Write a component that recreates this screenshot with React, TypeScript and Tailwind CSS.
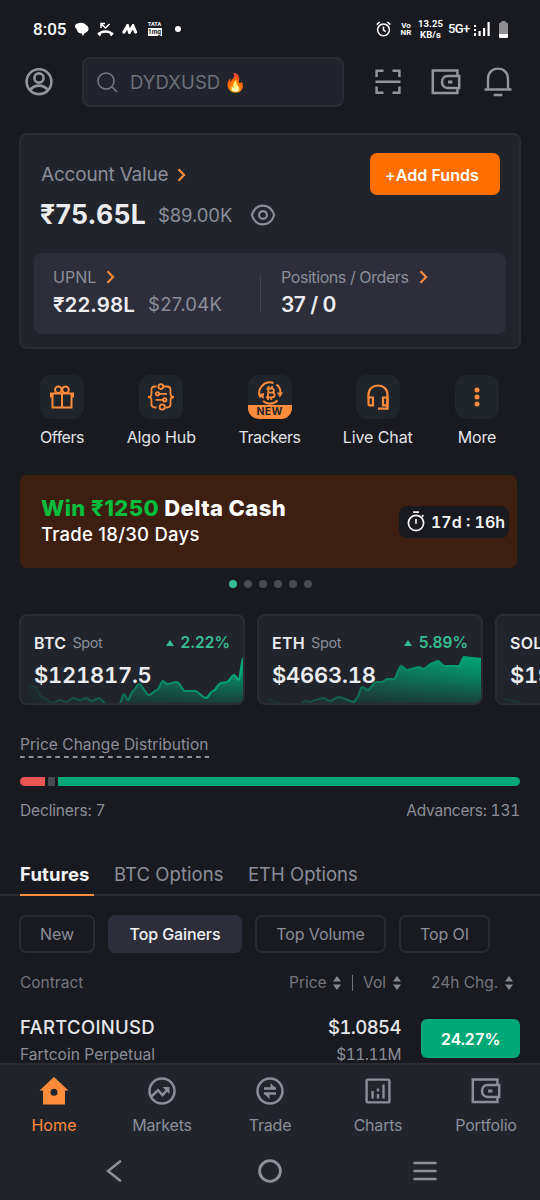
import type { ReactNode } from 'react';

const actions = [
  { label: 'Offers', icon: <GiftIcon />, width: 'w-[66px]', text: 'tracking-[-0.5px]' },
  { label: 'Algo Hub', icon: <AlgoIcon />, width: 'w-[84px]', text: 'tracking-[-0.1px]' },
  { label: 'Trackers', icon: <TrackerIcon />, width: 'w-[84px]', text: 'tracking-[-0.5px]', isNew: true },
  { label: 'Live Chat', icon: <HeadsetIcon />, width: 'w-[84px]', text: 'tracking-[-0.1px]' },
  { label: 'More', icon: <MoreIcon />, width: 'w-[66px]', text: 'tracking-[-0.2px]' },
];

const btcLine: number[][][] = [
  [[8, 70], [15, 72], [22, 82], [33, 88], [40, 85], [46, 87], [53, 83], [60, 85], [66, 83], [72, 86], [79, 83], [87, 90]],
  [[99, 90], [104, 79], [108, 85], [113, 76], [119, 69], [129, 80], [137, 75], [143, 66], [147, 69], [157, 67], [165, 76], [175, 76], [186, 83], [193, 76], [201, 68], [207, 67], [214, 60], [219, 65], [223, 43]],
];

const ethLine: number[][][] = [
  [[8, 84], [18, 87], [28, 90]],
  [[42, 90], [47, 86], [52, 87], [57, 85], [65, 83], [72, 86], [81, 82], [96, 87], [99, 83], [104, 72], [110, 75], [118, 67], [124, 67], [129, 64], [136, 64], [143, 51], [149, 55], [161, 52], [165, 54], [175, 48], [180, 46], [186, 51], [201, 51], [206, 42], [214, 43], [224, 44]],
];

const solLine: number[][][] = [[[8, 84], [18, 86], [28, 90]]];

const tickers = [
  { id: 'btc', symbol: 'BTC', price: '$121817.5', change: '2.22%', line: btcLine },
  { id: 'eth', symbol: 'ETH', price: '$4663.18', change: '5.89%', line: ethLine },
  { id: 'sol', symbol: 'SOL', price: '$198.42', change: '4.10%', line: solLine },
];

const filters = [
  { label: 'New', width: 'w-[76px]' },
  { label: 'Top Gainers', width: 'w-[134px]' },
  { label: 'Top Volume', width: 'w-[131px]' },
  { label: 'Top OI', width: 'w-[91px]' },
];

function smoothPath(points: number[][]) {
  let d = `M${points[0][0]} ${points[0][1]}`;
  for (let i = 1; i < points.length; i++) {
    const [px, py] = points[i - 1];
    const [x, y] = points[i];
    const dx = (x - px) * 0.3;
    d += ` C${px + dx} ${py} ${x - dx} ${y} ${x} ${y}`;
  }
  return d;
}

function ProfileIcon() {
  return (
    <svg width="28" height="28" viewBox="0 0 28 28" fill="none" stroke="#93959f" strokeWidth="2.6">
      <circle cx="14" cy="13.7" r="12.4" />
      <circle cx="14" cy="10" r="4.6" />
      <path d="M5 22.2c2.3-3 5.3-4.6 9-4.6s6.7 1.6 9 4.6" />
    </svg>
  );
}

function SearchIcon() {
  return (
    <svg width="21" height="21" viewBox="0 0 21 21" fill="none" stroke="#797c85" strokeWidth="1.5">
      <circle cx="9" cy="9" r="8" />
      <path d="M14.8 14.8 20 20" />
    </svg>
  );
}

function ScanIcon() {
  return (
    <svg width="26" height="26" viewBox="0 0 26 26" fill="none" stroke="#93959f" strokeWidth="2.5">
      <path d="M1.6 8V1.8H8.5M17.5 1.8h6.9V8M1.6 17.5v6.2H8.5M17.5 23.7h6.9v-6.2M.5 12.7h25" />
    </svg>
  );
}

function WalletIcon({ color = '#93959f' }: { color?: string }) {
  return (
    <svg width="30" height="26" viewBox="0 0 30 26" fill="none" stroke={color} strokeWidth="2.5">
      <path d="M26.4 6.4V1.6H1.8v22.4h24.6v-4.6" />
      <path d="M28.2 6.9H16.6c-7.4 0-7.4 12 0 12h11.6z" />
      <path d="M17 13h4.4" strokeWidth="3" />
    </svg>
  );
}

function BellIcon() {
  return (
    <svg width="28" height="30" viewBox="0 0 28 30" fill="none" stroke="#93959f" strokeWidth="2.4">
      <path d="M4 22.5V11.8C4 5.6 8.3 1.6 14 1.6s10 4 10 10.2V22.5M.5 22.5h27M9.7 28h8.6" />
    </svg>
  );
}

function Chevron({ className }: { className?: string }) {
  return (
    <svg className={className} width="9" height="14" viewBox="0 0 9 14" fill="none" stroke="#ff8c3a" strokeWidth="2.1">
      <path d="m1.5 1.2 5.6 5.8-5.6 5.8" />
    </svg>
  );
}

function EyeIcon() {
  return (
    <svg width="26" height="22" viewBox="0 0 26 22" fill="none" stroke="#8b8e98" strokeWidth="2.2">
      <path d="M1.8 11C3.8 5 8 1.6 13 1.6S22.2 5 24.2 11C22.2 17 18 20.4 13 20.4S3.8 17 1.8 11z" />
      <circle cx="13" cy="11" r="3.9" />
    </svg>
  );
}

function GiftIcon() {
  return (
    <svg width="26" height="24" viewBox="0 0 26 24" fill="none" stroke="#ff8c3a" strokeWidth="2">
      <path d="M1 8.4h24M2 7.4v5M24 7.4v5M3.5 8.4V22.5h19V8.4M13 8v14" />
      <circle cx="9.3" cy="4.8" r="3.3" />
      <circle cx="16.5" cy="4.8" r="3.3" />
    </svg>
  );
}

function AlgoIcon() {
  return (
    <svg width="28" height="28" viewBox="0 0 28 28" fill="none" stroke="#ff8c3a" strokeWidth="1.8">
      <path d="M9.5 3.5H8C5.5 3.5 4.5 5 4.5 7v3.5c0 2-1 3.5-3.5 3.5 2.5 0 3.5 1.5 3.5 3.5V21c0 2 1 3.5 3.5 3.5h1.5" />
      <path d="M16.5 3.5H20c2.5 0 3.5 1.5 3.5 3.5v3.5c0 2 1 3.5 3.5 3.5-2.5 0-3.5 1.5-3.5 3.5V21c0 2-1 3.5-3.5 3.5h-1.5" />
      <circle cx="13.8" cy="3.6" r="2.4" />
      <circle cx="15.2" cy="24" r="2.6" />
      <circle cx="10.5" cy="10.8" r="1.7" />
      <circle cx="17.8" cy="16.8" r="1.7" />
      <path d="M12.2 10.8H20M8.5 16.8H16" />
    </svg>
  );
}

function TrackerIcon() {
  return (
    <svg width="26" height="26" viewBox="0 0 26 26" fill="none" stroke="#ff8c3a" strokeWidth="2">
      <path d="M3.3 17.5A10.6 10.6 0 0 1 16.5 3M19.5 4.5A10.6 10.6 0 0 1 23.4 14M20.5 20.5A10.6 10.6 0 0 1 6 21" />
      <path d="M.8 14.5 6.5 19 7 13zM20 12.5h6l-3.2 5z" fill="#ff8c3a" stroke="none" />
      <path d="M9.5 8.5h5c3.2 0 3.2 4.2 0 4.2h-3.5 4c3.5 0 3.5 4.6 0 4.6H9M11.5 8.5 10.8 17M11.6 6v2.5M15 6v2.5M11 17.5V20M14.3 17.5V20" strokeWidth="1.8" />
    </svg>
  );
}

function HeadsetIcon() {
  return (
    <svg width="24" height="27" viewBox="0 0 24 27" fill="none" stroke="#ff8c3a" strokeWidth="2.2">
      <path d="M2.5 14v-3.5C2.5 5 6.5 1.5 12 1.5s9.5 3.5 9.5 9v14.2H12" />
      <path d="M2.5 13.5h4.5v7.8H4q-1.5 0-1.5-1.5zM17 13.5h4.5v7.8H17z" />
    </svg>
  );
}

function MoreIcon() {
  return (
    <svg width="6" height="20" viewBox="0 0 6 20" fill="#ff8c3a">
      <circle cx="3" cy="3" r="2.5" />
      <circle cx="3" cy="10" r="2.5" />
      <circle cx="3" cy="17" r="2.5" />
    </svg>
  );
}

function StopwatchIcon() {
  return (
    <svg width="18" height="21" viewBox="0 0 18 21" fill="none" stroke="#f3f3f5" strokeWidth="1.7">
      <circle cx="9" cy="12" r="7.6" />
      <path d="M6 1.2h6M9 8v4.8M14.8 5.8l1.6-1.6" />
    </svg>
  );
}

function SortIcon() {
  return (
    <svg width="8" height="14" viewBox="0 0 8 14" fill="#85878f">
      <path d="M4 0l4 5.5H0zM4 14l4-5.5H0z" />
    </svg>
  );
}

function StatusBar() {
  return (
    <div className="flex h-[57px] items-start pt-[19px] pl-[33px] font-[Roboto,sans-serif] text-white">
      <span className="w-[34px] text-[17px] leading-5 font-medium whitespace-nowrap">8:05</span>
      <svg className="mt-[3px] ml-[7px]" width="15" height="15" viewBox="0 0 15 15" fill="#fff">
        <path d="M1 3.5C3 0 10 0 12 3c4 2 3 7-1 8L8.5 14 8 11.5C5 11.5 3 10 2.6 7 1.5 6 .5 5 1 3.5z" />
      </svg>
      <svg className="mt-[3px] ml-[8px]" width="17" height="15" viewBox="0 0 17 15" fill="none" stroke="#fff" strokeWidth="1.5">
        <path d="M4 6V1.5h4M4.5 2 8.5 6l4-4" />
        <path d="M2 12.5C4 8.5 13 8.5 15 12.5" strokeWidth="2.5" />
        <path d="M1 11l2.5 2.5M16 11l-2.5 2.5" strokeWidth="2.2" />
      </svg>
      <svg className="mt-[5px] ml-[8px]" width="16" height="10" viewBox="0 0 16 10" fill="none" stroke="#fff" strokeWidth="3.2" strokeLinecap="round">
        <path d="M2 8 5.5 2 7.5 8 11 2l2.5 6" />
      </svg>
      <div className="mt-[3px] ml-[9px] flex w-[15px] flex-col items-center">
        <span className="text-[5.5px] leading-[5px] font-bold">TATA</span>
        <span className="mt-px flex h-[8px] w-[14px] items-center justify-center bg-white text-[6.5px] leading-[8px] font-bold text-[#191a1f]">1mg</span>
      </div>
      <span className="mt-[7px] ml-[13px] size-[6px] rounded-full bg-white" />

      <svg className="mt-[2px] ml-[195px] shrink-0" width="15" height="16" viewBox="0 0 15 16" fill="none" stroke="#fff" strokeWidth="1.5">
        <circle cx="7.5" cy="8.8" r="5.9" />
        <path d="M7.5 5.5v3.6l2.2 1.6M.7 3.6 3.7 1M14.3 3.6 11.3 1" />
      </svg>
      <div className="mt-[3px] ml-[8px] flex w-[14px] flex-col items-center text-[8px] leading-[7px] font-bold">
        <span>Vo</span>
        <span>NR</span>
      </div>
      <div className="-mt-px ml-[4px] flex w-[27px] flex-col items-center text-[9.5px] leading-[11px] font-bold tracking-[0.1px]">
        <span>13.25</span>
        <span>KB/s</span>
      </div>
      <span className="ml-[4px] w-[22px] text-[13px] leading-5 font-medium tracking-[-0.6px] whitespace-nowrap">5G+</span>
      <svg className="mt-[3px] ml-[4px] shrink-0" width="16" height="14" viewBox="0 0 16 14" fill="#fff">
        <path d="M0 3h2v2H0zM0 7h2v2H0zM0 11h2v3H0zM4.5 9h2.2v5h-2.2zM9 6h2.2v8H9zM13.5 0h2.2v14h-2.2z" />
      </svg>
      <svg className="mt-[2px] ml-[9px] shrink-0" width="9" height="17" viewBox="0 0 9 17">
        <path d="M2.5 0h4v1.5H7.5Q9 1.5 9 3v12.5q0 1.5-1.5 1.5h-6Q0 17 0 15.5V3q0-1.5 1.5-1.5h1z" fill="#8f8f93" />
        <path d="M0 13h9v2.5q0 1.5-1.5 1.5h-6Q0 17 0 15.5z" fill="#fff" />
      </svg>
    </div>
  );
}

function Header() {
  return (
    <header className="flex h-[50px] items-center">
      <div className="ml-[25px]"><ProfileIcon /></div>
      <div className="ml-[29px] flex h-[50px] w-[262px] items-center rounded-lg border-2 border-[#2a2c32] bg-[#21242c] pl-[13px]">
        <SearchIcon />
        <span className="mt-px ml-[12px] text-[18.5px] tracking-[0.1px] text-[#6d7078]">DYDXUSD</span>
        <span className="mt-px ml-[4px] text-[18px] leading-6">🔥</span>
      </div>
      <div className="ml-[31px]"><ScanIcon /></div>
      <div className="ml-[30px]"><WalletIcon /></div>
      <div className="ml-[23px]"><BellIcon /></div>
    </header>
  );
}

function AccountCard() {
  return (
    <section className="mx-[19px] mt-[26px] h-[216px] rounded-lg border-2 border-[#2a2c32] bg-[#21242b] px-[13px]">
      <div className="flex h-[79px] items-start justify-between pt-[18px] pl-[7px]">
        <div className="mt-px flex h-[42px] items-center">
          <span className="text-[19px] tracking-[-0.2px] text-[#8b8e98]">Account Value</span>
          <Chevron className="ml-[9px]" />
        </div>
        <button className="mr-[6px] h-[42px] w-[130px] rounded-[7px] bg-[#ff6f00] pt-px pr-[6px] text-[16px] font-semibold tracking-[0.05px] whitespace-nowrap text-white">
          <span className="font-medium">+</span>Add Funds
        </button>
      </div>
      <div className="-mt-[17px] flex h-[36px] items-center pl-[6px]">
        <span className="w-[118px] text-[26.5px] font-bold tracking-[0.3px] text-[#ececef]">₹75.65L</span>
        <span className="mt-[2px] w-[92px] text-[18.5px] tracking-[-0.1px] text-[#8b8e98]">$89.00K</span>
        <div className="-mt-px"><EyeIcon /></div>
      </div>
      <div className="mt-[20px] flex h-[81px] rounded-lg bg-[#2d2e3a] pt-[14px]">
        <div className="w-[226px] pl-[19px]">
          <div className="flex h-5 items-center text-[16px] text-[#8b8e98]">
            <span className="w-[53px]">UPNL</span>
            <Chevron />
          </div>
          <div className="mt-[4px] flex h-7 items-center">
            <span className="w-[95px] text-[20.5px] font-semibold tracking-[0.1px] text-[#ececef]">₹22.98L</span>
            <span className="text-[18.5px] tracking-[0.3px] text-[#8b8e98]">$27.04K</span>
          </div>
        </div>
        <div className="mt-[8px] h-[38px] w-px bg-[#43444f]" />
        <div className="pl-[20px]">
          <div className="flex h-5 items-center text-[16px] text-[#8b8e98]">
            <span className="w-[138px] tracking-[-0.42px] whitespace-nowrap">Positions / Orders</span>
            <Chevron />
          </div>
          <div className="mt-[4px] flex h-7 items-center text-[21px] font-semibold tracking-[-0.5px] text-[#ececef]">37 / 0</div>
        </div>
      </div>
    </section>
  );
}

function QuickActions() {
  return (
    <div className="mt-[26px] flex justify-between pr-[30px] pl-[29px]">
      {actions.map((action) => (
        <div key={action.label} className={`flex flex-col items-center ${action.width}`}>
          <div className="relative flex size-[44px] items-center justify-center overflow-hidden rounded-[11px] bg-[#20242b]">
            {action.isNew ? <div className="-mt-[9px]">{action.icon}</div> : action.icon}
            {action.isNew && (
              <div className="absolute inset-x-0 bottom-0 h-[14px] bg-[#ff8c3a] text-center text-[10.5px] leading-[14px] font-bold tracking-[0.3px] text-[#22242b]">
                NEW
              </div>
            )}
          </div>
          <span className={`mt-[6px] text-[16px] leading-6 whitespace-nowrap text-[#e2e3e7] ${action.text}`}>{action.label}</span>
        </div>
      ))}
    </div>
  );
}

function Banner() {
  return (
    <>
      <div className="mt-[26px] ml-[20px] flex h-[93px] w-[497px] items-center justify-between rounded-[7px] bg-[#3d1f12] pr-[8px] pl-[21px]">
        <div className="-mt-px">
          <div className="text-[22px] leading-[27px] font-extrabold tracking-[0.4px] whitespace-nowrap text-white">
            <span className="text-[#08bd3d]">Win ₹1250</span> Delta Cash
          </div>
          <div className="text-[18.5px] leading-[25px] font-medium tracking-[0.25px] text-white">Trade 18/30 Days</div>
        </div>
        <div className="flex h-[32px] w-[110px] items-center rounded-lg bg-[#191a1f] pl-[8px]">
          <StopwatchIcon />
          <span className="ml-[6px] text-[16px] font-semibold whitespace-nowrap text-[#f3f3f5] tabular-nums">17d : 16h</span>
        </div>
      </div>
      <div className="mt-[12px] flex justify-center gap-[7px]">
        {[0, 1, 2, 3, 4, 5].map((i) => (
          <span key={i} className={`size-[8px] rounded-full ${i === 0 ? 'bg-[#37bd92]' : 'bg-[#4a4b51]'}`} />
        ))}
      </div>
    </>
  );
}

function Sparkline({ id, line }: { id: string; line: number[][][] }) {
  return (
    <svg className="absolute inset-0" width="223" height="89" viewBox="1 1 223 89" fill="none">
      <defs>
        <linearGradient id={`${id}-fill`} x1="0" y1="42" x2="0" y2="90" gradientUnits="userSpaceOnUse">
          <stop offset="0" stopColor="#00a876" />
          <stop offset="0.4" stopColor="#00a876" stopOpacity="0.75" />
          <stop offset="1" stopColor="#00a876" stopOpacity="0.18" />
        </linearGradient>
        <linearGradient id={`${id}-fade`} x1="0" y1="0" x2="224" y2="0" gradientUnits="userSpaceOnUse">
          <stop offset="0" stopColor="#fff" stopOpacity="0.05" />
          <stop offset="0.35" stopColor="#fff" stopOpacity="0.45" />
          <stop offset="0.6" stopColor="#fff" stopOpacity="0.75" />
          <stop offset="1" stopColor="#fff" />
        </linearGradient>
        <mask id={`${id}-mask`} maskUnits="userSpaceOnUse" x="0" y="0" width="224" height="90">
          <rect width="224" height="90" fill={`url(#${id}-fade)`} />
        </mask>
      </defs>
      <g mask={`url(#${id}-mask)`}>
        {line.map((points, i) => (
          <g key={i}>
            <path d={`${smoothPath(points)}V90H${points[0][0]}Z`} fill={`url(#${id}-fill)`} />
            <path d={smoothPath(points)} stroke="#00a876" strokeWidth="2.2" />
          </g>
        ))}
      </g>
    </svg>
  );
}

function Tickers() {
  return (
    <div className="mt-[26px] flex gap-[12px] overflow-hidden pl-[19px]">
      {tickers.map((t) => (
        <div key={t.id} className="relative h-[91px] w-[226px] shrink-0 overflow-hidden rounded-lg border-2 border-[#2a2c32] bg-[#21242b]">
          <Sparkline id={t.id} line={t.line} />
          <div className="relative mt-[17px] flex h-5 items-center justify-between pr-[13px] pl-[13px]">
            <div className="flex items-center gap-[6px]">
              <span className="text-[16px] font-semibold tracking-[0.3px] text-[#ececef]">{t.symbol}</span>
              <span className="text-[14.5px] tracking-[-0.4px] text-[#8b8e98]">Spot</span>
            </div>
            <div className="flex items-center gap-[7px] text-[#37bd92]">
              <svg width="8" height="6" viewBox="0 0 8 6" fill="currentColor"><path d="M4 0l4 6H0z" /></svg>
              <span className="text-[15.5px] font-semibold">{t.change}</span>
            </div>
          </div>
          <div className="relative mt-[8px] pl-[13px] text-[22px] leading-7 font-semibold tracking-[-0.25px] text-[#ececef] tabular-nums">{t.price}</div>
        </div>
      ))}
    </div>
  );
}

function Distribution() {
  return (
    <section className="mt-[28px] px-[20px] text-[15.5px] text-[#8b8e98]">
      <div className="w-[189px]">
        <div className="h-[23px] leading-[23px] tracking-[0.05px] whitespace-nowrap">Price Change Distribution</div>
        <svg className="block" width="189" height="2" viewBox="0 0 189 2">
          <path d="M0 1h189" stroke="#b9bac0" strokeWidth="1.5" strokeDasharray="4.8 4" />
        </svg>
      </div>
      <div className="mt-[19px] flex h-[9px] gap-[3px]">
        <div className="w-[25px] rounded-l-full rounded-r-[1px] bg-[#ea5455]" />
        <div className="w-[7px] rounded-[1px] bg-[#4a4b51]" />
        <div className="flex-1 rounded-l-[1px] rounded-r-full bg-[#00a876]" />
      </div>
      <div className="mt-[13px] flex h-6 items-center justify-between tabular-nums">
        <span className="tracking-[-0.15px]">Decliners: 7</span>
        <span className="tracking-[-0.25px]">Advancers: 131</span>
      </div>
    </section>
  );
}

function Market() {
  return (
    <section className="mt-[38px]">
      <div className="flex h-[35px] border-b-2 border-[#2b2c31] pl-[20px] text-[18.5px] text-[#8b8e98]">
        <div className="mr-[20px] h-[35px] w-[74px] border-b-2 border-[#ff8c3a] leading-[26px] font-bold tracking-[0.15px] whitespace-nowrap text-[#f3f3f5]">Futures</div>
        <div className="w-[134px] leading-[26px] tracking-[0.05px] whitespace-nowrap">BTC Options</div>
        <div className="leading-[26px] whitespace-nowrap">ETH Options</div>
      </div>

      <div className="mt-[19px] ml-[19px] flex h-[38px] gap-[13px] text-[16px] tracking-[-0.1px]">
        {filters.map((f) => (
          <button
            key={f.label}
            className={`rounded-[7px] border-2 pb-px whitespace-nowrap ${f.width} ${
              f.label === 'Top Gainers'
                ? 'border-[#2d2e3a] bg-[#2d2e3a] font-medium text-[#f3f3f5]'
                : 'border-[#2a2b31] text-[#8b8e98]'
            }`}
          >
            {f.label}
          </button>
        ))}
      </div>

      <div className="mt-[18px] flex h-6 items-center pl-[20px] text-[15.5px] text-[#74767e]">
        <span className="w-[269px]">Contract</span>
        <span className="w-[44px]">Price</span>
        <SortIcon />
        <span className="ml-[11px] h-4 w-px bg-[#74767e]" />
        <span className="ml-[10px] w-[30px]">Vol</span>
        <SortIcon />
        <span className="ml-[30px] w-[74px] whitespace-nowrap">24h Chg.</span>
        <SortIcon />
      </div>

      <div className="mt-[18px] flex justify-between px-[20px]">
        <div>
          <div className="text-[18.5px] leading-[28px] font-medium tracking-[0.3px] text-[#e6e7ea]">FARTCOINUSD</div>
          <div className="text-[15.5px] leading-[28px] tracking-[0.05px] text-[#8b8e98]">Fartcoin Perpetual</div>
        </div>
        <div className="flex tabular-nums">
          <div className="text-right">
            <div className="text-[18.5px] leading-[28px] font-medium tracking-[-0.55px] text-[#e6e7ea]">$1.0854</div>
            <div className="text-[15.5px] leading-[28px] tracking-[-0.5px] text-[#8b8e98]">$11.11M</div>
          </div>
          <div className="mt-[6px] ml-[20px] flex h-[39px] w-[99px] items-center justify-center rounded-md bg-[#00a876] text-[16px] font-semibold tracking-[-0.4px] text-white">
            24.27%
          </div>
        </div>
      </div>
    </section>
  );
}

function NavItem({ label, active, children }: { label: string; active?: boolean; children: ReactNode }) {
  return (
    <div className={`flex w-[108px] flex-col items-center ${active ? 'text-[#ff8c3a]' : 'text-[#8b8e98]'}`}>
      <div className="flex h-[32px] items-center">{children}</div>
      <span className={`mt-[6px] text-[16px] leading-6 ${active ? 'tracking-[0.1px]' : 'tracking-[-0.2px]'}`}>{label}</span>
    </div>
  );
}

function BottomNav() {
  return (
    <nav className="h-[137px] shrink-0 border-t-2 border-[#2a2c32] bg-[#21242b]">
      <div className="flex pt-[10px]">
        <NavItem label="Home" active>
          <svg width="30" height="28" viewBox="0 0 30 28" fill="currentColor" fillRule="evenodd">
            <path d="M15 0 29.5 13.5H26V27.5H4V13.5H.5zM15 11.8a3.5 3.5 0 1 0 0 7 3.5 3.5 0 1 0 0-7z" />
          </svg>
        </NavItem>
        <NavItem label="Markets">
          <svg width="28" height="28" viewBox="0 0 28 28" fill="none" stroke="currentColor" strokeWidth="2.5">
            <circle cx="14" cy="14" r="12.5" />
            <path d="M3.5 19.5 10 13.2l4.5 5L20 12" />
            <path d="M14.5 10h7v7z" fill="currentColor" stroke="none" />
          </svg>
        </NavItem>
        <NavItem label="Trade">
          <svg width="28" height="28" viewBox="0 0 28 28" fill="none" stroke="currentColor" strokeWidth="2.5">
            <circle cx="14" cy="14" r="12.5" />
            <path d="M8 11.4h12M8 16.6h12" />
            <path d="M14.5 6v5.4H20zM13.5 22v-5.4H8z" fill="currentColor" stroke="none" />
          </svg>
        </NavItem>
        <NavItem label="Charts">
          <svg width="26" height="26" viewBox="0 0 26 26" fill="none" stroke="currentColor" strokeWidth="2.4">
            <rect x="1.6" y="1.6" width="22.8" height="22.8" rx="1" />
            <path d="M7.6 13v7.5M13 10.5v3M13 16v4.500M18.5 6.5v14" />
          </svg>
        </NavItem>
        <NavItem label="Portfolio">
          <WalletIcon color="#8b8e98" />
        </NavItem>
      </div>
      <div className="mt-[7px] flex h-[54px] items-center text-[#8f9099]">
        <svg className="ml-[106px]" width="16" height="22" viewBox="0 0 16 22" fill="none" stroke="currentColor" strokeWidth="2.6" strokeLinecap="round">
          <path d="M14 1.5 2 11l12 9.5" />
        </svg>
        <svg className="ml-[136px]" width="24" height="24" viewBox="0 0 24 24" fill="none" stroke="currentColor" strokeWidth="2.8">
          <circle cx="12" cy="12" r="10.4" />
        </svg>
        <svg className="ml-[131px]" width="24" height="20" viewBox="0 0 24 20" fill="none" stroke="currentColor" strokeWidth="2.6" strokeLinecap="round">
          <path d="M1.5 2h21M1.5 10h21M1.5 18h21" />
        </svg>
      </div>
    </nav>
  );
}

export default function App() {
  return (
    <div className="flex h-[1200px] w-[540px] flex-col overflow-hidden bg-[#191a1f] font-[Inter,'Noto_Sans',sans-serif]">
      <main className="h-[1063px] shrink-0 overflow-hidden">
        <StatusBar />
        <Header />
        <AccountCard />
        <QuickActions />
        <Banner />
        <Tickers />
        <Distribution />
        <Market />
      </main>
      <BottomNav />
    </div>
  );
}
